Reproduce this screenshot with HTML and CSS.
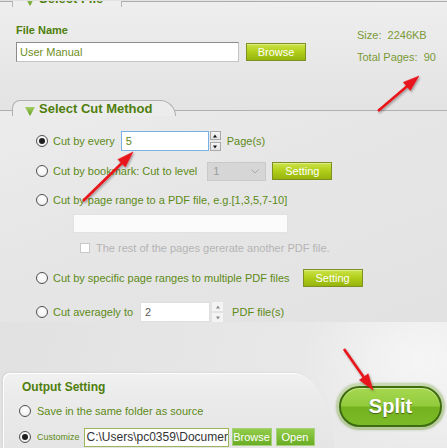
FILE: index.html
```html
<!DOCTYPE html>
<html>
<head>
<meta charset="utf-8">
<link rel="stylesheet" href="styles.css">
</head>
<body>
<div class="app">
  <section class="file-panel">
    <div class="stub"><span class="tri"></span><span class="stub-title">Select File</span></div>
    <div class="file-body">
      <div class="file-left">
        <div class="field-label">File Name</div>
        <div class="file-row">
          <div class="text-input wide">User Manual</div>
          <button class="btn lime browse">Browse</button>
        </div>
      </div>
      <div class="file-info">
        <div>Size:&nbsp; 2246KB</div>
        <div class="pages">Total Pages:&nbsp; 90</div>
      </div>
    </div>
  </section>

  <section class="cut-panel">
    <div class="cut-tab"><span class="tri"></span><span class="tab-title">Select Cut Method</span></div>
    <div class="options">
      <div class="opt r1">
        <span class="radio on"></span>
        <span class="lbl">Cut by every</span>
        <div class="num-input blue every">5</div>
        <div class="spin boxed"><span class="up"></span><span class="down"></span></div>
        <span class="lbl unit1">Page(s)</span>
      </div>
      <div class="opt r2">
        <span class="radio"></span>
        <span class="lbl">Cut by bookmark: Cut to level</span>
        <div class="select">1<svg width="8" height="5" viewBox="0 0 8 5"><polyline points="0.5,0.5 4,4 7.5,0.5" fill="none" stroke="#a8a8a8" stroke-width="1"/></svg></div>
        <button class="btn lime setting1">Setting</button>
      </div>
      <div class="opt r3">
        <span class="radio"></span>
        <span class="lbl">Cut by page range to a PDF file, e.g.[1,3,5,7-10]</span>
      </div>
      <div class="range-input"></div>
      <div class="opt check-row">
        <span class="check"></span>
        <span class="lbl muted">The rest of the pages gererate another PDF file.</span>
      </div>
      <div class="opt r4">
        <span class="radio"></span>
        <span class="lbl">Cut by specific page ranges to multiple PDF files</span>
        <button class="btn lime setting2">Setting</button>
      </div>
      <div class="opt r5">
        <span class="radio"></span>
        <span class="lbl">Cut averagely to</span>
        <div class="num-input avg">2</div>
        <div class="spin light"><span class="up"></span><span class="down"></span></div>
        <span class="lbl unit2">PDF file(s)</span>
      </div>
    </div>
  </section>

  <section class="bottom">
    <div class="output-panel">
      <div class="out-title">Output Setting</div>
      <div class="out-row o1">
        <span class="radio"></span>
        <span class="lbl">Save in the same folder as source</span>
      </div>
      <div class="out-row o2">
        <span class="radio on"></span>
        <span class="lbl small">Customize</span>
        <div class="path-input">C:\Users\pc0359\Documents</div>
        <button class="btn green b-browse">Browse</button>
        <button class="btn green b-open">Open</button>
      </div>
    </div>
    <div class="split-wrap"><button class="split">Split</button></div>
  </section>

  <svg class="arrows" width="447" height="448" viewBox="0 0 447 448">
    <defs>
      <filter id="sh" x="-20%" y="-20%" width="140%" height="140%">
        <feDropShadow dx="1" dy="1.5" stdDeviation="1" flood-color="#000" flood-opacity="0.35"/>
      </filter>
    </defs>
    <g fill="#e8141a" stroke="#e8141a" filter="url(#sh)">
      <line x1="378" y1="111" x2="408" y2="85.5" stroke-width="2.6"/>
      <polygon points="419,76 410.3,90.5 403.3,82.3" stroke-width="0.5"/>
      <line x1="83" y1="201" x2="123" y2="162" stroke-width="2.6"/>
      <polygon points="133,152 125.3,167 117.9,159.4" stroke-width="0.5"/>
      <line x1="344" y1="349" x2="365" y2="379" stroke-width="2.6"/>
      <polygon points="373,390 368.2,373.7 359.4,380" stroke-width="0.5"/>
    </g>
  </svg>
</div>
</body>
</html>
```

FILE: styles.css
```css
* { box-sizing: border-box; }

html, body {
  margin: 0;
  padding: 0;
}

body {
  width: 447px;
  height: 448px;
  overflow: hidden;
  background: #e4e4e4;
  font-family: "Liberation Sans", Arial, sans-serif;
  font-size: 11px;
  color: #5d8a17;
}

.app {
  position: relative;
  width: 447px;
  height: 448px;
  overflow: hidden;
  background:
    radial-gradient(ellipse 120px 90px at 420px 360px, rgba(255,255,255,0.55), rgba(255,255,255,0) 100%),
    linear-gradient(100deg, #e0e0e0 0%, #e6e6e6 50%, #ebebeb 100%);
}

button {
  font-family: inherit;
  padding: 0;
  margin: 0;
  cursor: default;
}

/* ---------- File panel ---------- */
.file-panel {
  margin-top: 1px;
  border-top: 1px solid #acacac;
  height: 109px;
  background: linear-gradient(180deg, #eeeeee 0%, #e6e6e6 70%, #e3e3e3 100%);
}

.stub {
  margin-top: -1px;
  margin-left: 12px;
  width: 110px;
  height: 6px;
  border-left: 1px solid #b4b4b4;
  border-right: 1px solid #b4b4b4;
  background: #eeeeee;
  overflow: hidden;
  display: flex;
  align-items: flex-start;
  padding-left: 12px;
}

.tri {
  flex: none;
  width: 10px;
  height: 9px;
  background: linear-gradient(180deg, #a5cf63, #5f9a1c);
  clip-path: polygon(0 0, 100% 0, 50% 100%);
}

.stub .tri {
  margin-top: -4px;
  margin-right: 4px;
}

.stub-title {
  margin-top: -10px;
  font-weight: bold;
  font-size: 13px;
  line-height: 15px;
  color: #4f7e0d;
}

.file-body {
  display: flex;
  padding-left: 16px;
}

.field-label {
  margin-top: 17px;
  font-weight: bold;
  font-size: 11px;
  line-height: 13px;
  color: #4f7e0d;
}

.file-row {
  margin-top: 5px;
  display: flex;
  align-items: center;
}

.text-input.wide {
  width: 223px;
  height: 20px;
  border: 1px solid #8c8c8c;
  border-right-color: #c4c4c4;
  border-bottom-color: #c4c4c4;
  background: #fff;
  padding-left: 3px;
  line-height: 18px;
  color: #6f8f24;
}

.btn {
  height: 18px;
  color: #fff;
  font-size: 11px;
  line-height: 16px;
  text-align: center;
}

.btn.lime {
  width: 60px;
  border: 1px solid #7e9020;
  background: linear-gradient(180deg, #cde34a 0%, #b3d01c 45%, #96b40c 100%);
  box-shadow: inset 0 1px 0 rgba(255,255,255,0.35);
}

.browse { margin-left: 7px; }

.file-info {
  margin-left: 51px;
  padding-top: 22px;
  line-height: 13px;
  color: #7a9a37;
}

.file-info .pages { margin-top: 9px; }

/* ---------- Cut method panel ---------- */
.cut-panel {
  border-top: 1px solid #b0b0b0;
  height: 212px;
  background: linear-gradient(160deg, #ececec 0%, #e6e6e6 40%, #e2e2e2 100%);
}

.cut-tab {
  margin-top: -11px;
  margin-left: 12px;
  width: 164px;
  height: 16px;
  border: 1px solid #b0b0b0;
  border-bottom: none;
  border-radius: 8px 16px 0 0;
  background: #ececec;
  display: flex;
  align-items: flex-start;
  padding-left: 12px;
}

.cut-tab .tri {
  margin-top: 6px;
  margin-right: 4px;
}

.tab-title {
  font-weight: bold;
  font-size: 13px;
  line-height: 15px;
  color: #4f7e0d;
}

.options {
  margin-top: 15px;
  padding-left: 36px;
}

.opt {
  display: flex;
  align-items: center;
  height: 20px;
}

.r2 { margin-top: 10px; }
.r3 { margin-top: 9px; }
.check-row { margin-top: 7px; height: 16px; }
.r4 { margin-top: 12px; }
.r5 { margin-top: 14px; }

.radio {
  flex: none;
  width: 12px;
  height: 12px;
  border-radius: 50%;
  border: 1px solid #505050;
  background: radial-gradient(circle at 50% 40%, #ffffff 0%, #f4f4f4 60%, #dcdcdc 100%);
  display: grid;
  place-items: center;
  margin-right: 5px;
}

.radio.on::after {
  content: "";
  width: 6px;
  height: 6px;
  border-radius: 50%;
  background: #1e1e1e;
}

.lbl {
  white-space: nowrap;
  color: #5d8a17;
  line-height: 13px;
}

.muted { color: #b4b4b4; }

.num-input {
  height: 20px;
  background: #fff;
  line-height: 18px;
  padding-left: 4px;
  font-size: 11px;
}

.num-input.every {
  margin-left: 6px;
  width: 88px;
  border: 1px solid #79b0e6;
  color: #5d8a17;
}

.num-input.avg {
  margin-left: 7px;
  width: 70px;
  border: 1px solid #dedede;
  color: #5a5a5a;
}

.spin {
  flex: none;
  width: 11px;
  height: 20px;
  margin-left: 1px;
  display: flex;
  flex-direction: column;
  justify-content: space-between;
}

.spin span {
  height: 9px;
  position: relative;
  display: block;
}

.spin.boxed span {
  border: 1px solid #a9a9a9;
  background: linear-gradient(#f6f6f6, #e2e2e2);
}

.spin.light { margin-left: 2px; }
.spin.light span {
  background: #f4f4f4;
}

.spin span::after {
  content: "";
  position: absolute;
  left: 50%;
  top: 50%;
  width: 0;
  height: 0;
  border-left: 2.5px solid transparent;
  border-right: 2.5px solid transparent;
  transform: translate(-50%, -50%);
}

.spin .up::after { border-bottom: 3px solid #111; }
.spin .down::after { border-top: 3px solid #111; }
.spin.light .up::after { border-bottom-color: #8a8a8a; }
.spin.light .down::after { border-top-color: #8a8a8a; }

.unit1 { margin-left: 6px; }
.unit2 { margin-left: 9px; }

.select {
  margin-left: 10px;
  width: 59px;
  height: 19px;
  border: 1px solid #c9c9c9;
  background: #d6d6d6;
  color: #9c9c9c;
  line-height: 17px;
  padding-left: 5px;
  padding-right: 6px;
  display: flex;
  justify-content: space-between;
  align-items: center;
}

.setting1 { margin-left: 6px; }
.setting2 { margin-left: 13px; }

.range-input {
  margin-top: 4px;
  margin-left: 37px;
  width: 215px;
  height: 19px;
  background: #fbfbfb;
  border: 1px solid #e2e2e2;
}

.check {
  flex: none;
  margin-left: 44px;
  margin-right: 6px;
  width: 10px;
  height: 10px;
  border: 1px solid #c8c8c8;
  background: #fff;
}

/* ---------- Bottom ---------- */
.bottom {
  display: flex;
  align-items: flex-start;
  height: 126px;
  padding-top: 51px;
}

.output-panel {
  margin-left: 3px;
  width: 331px;
  height: 75px;
  border-radius: 7px 42px 0 0 / 7px 75px 0 0;
  background: linear-gradient(180deg, #f1f1f1 0%, #ebebeb 30%, #e5e5e5 100%);
  box-shadow: inset 1px 1px 0 rgba(255,255,255,0.9), -1px -1px 2px rgba(0,0,0,0.05);
  padding-top: 7px;
  padding-left: 16px;
}

.out-title {
  margin-left: 3px;
  font-weight: bold;
  font-size: 12px;
  line-height: 14px;
  color: #4f7e0d;
}

.out-row {
  display: flex;
  align-items: center;
}

.o1 {
  margin-top: 10px;
  height: 14px;
}

.o1 .radio { margin-right: 6px; }

.o2 {
  margin-top: 9px;
  height: 20px;
}

.o2 .radio { margin-right: 6px; }

.lbl.small {
  font-size: 9px;
}

.path-input {
  margin-left: 4px;
  width: 145px;
  height: 19px;
  border: 1px solid #9cb45a;
  background: #fff;
  color: #333;
  font-size: 12px;
  line-height: 17px;
  padding-left: 2px;
  white-space: nowrap;
  overflow: hidden;
}

.btn.green {
  height: 18px;
  border: 1px solid #a6d07a;
  background: linear-gradient(180deg, #92cc4c 0%, #7cbc34 55%, #6aac26 100%);
  color: #fff;
  line-height: 15px;
}

.b-browse { margin-left: 3px; width: 40px; }
.b-open { margin-left: 4px; width: 39px; }

.split-wrap {
  margin-top: 10px;
  margin-left: 2px;
  width: 109px;
  height: 47px;
  border-radius: 24px;
  padding: 3px;
  background: linear-gradient(180deg, #c9d9b2 0%, #b5c99a 100%);
  box-shadow: 0 0 2px rgba(120,150,90,0.5);
}

.split {
  display: block;
  width: 100%;
  height: 100%;
  border: 2px solid #3f6c0f;
  border-radius: 21px;
  background: linear-gradient(180deg, #a6d850 0%, #92cb3c 48%, #74b220 52%, #7cbb28 100%);
  color: #fff;
  font-weight: bold;
  font-size: 20px;
  line-height: 35px;
  text-align: center;
  text-shadow: 0 1px 1px rgba(0,0,0,0.45);
  box-shadow: inset 0 1px 0 rgba(255,255,255,0.4);
}

.arrows {
  position: absolute;
  left: 0;
  top: 0;
  pointer-events: none;
}
```
